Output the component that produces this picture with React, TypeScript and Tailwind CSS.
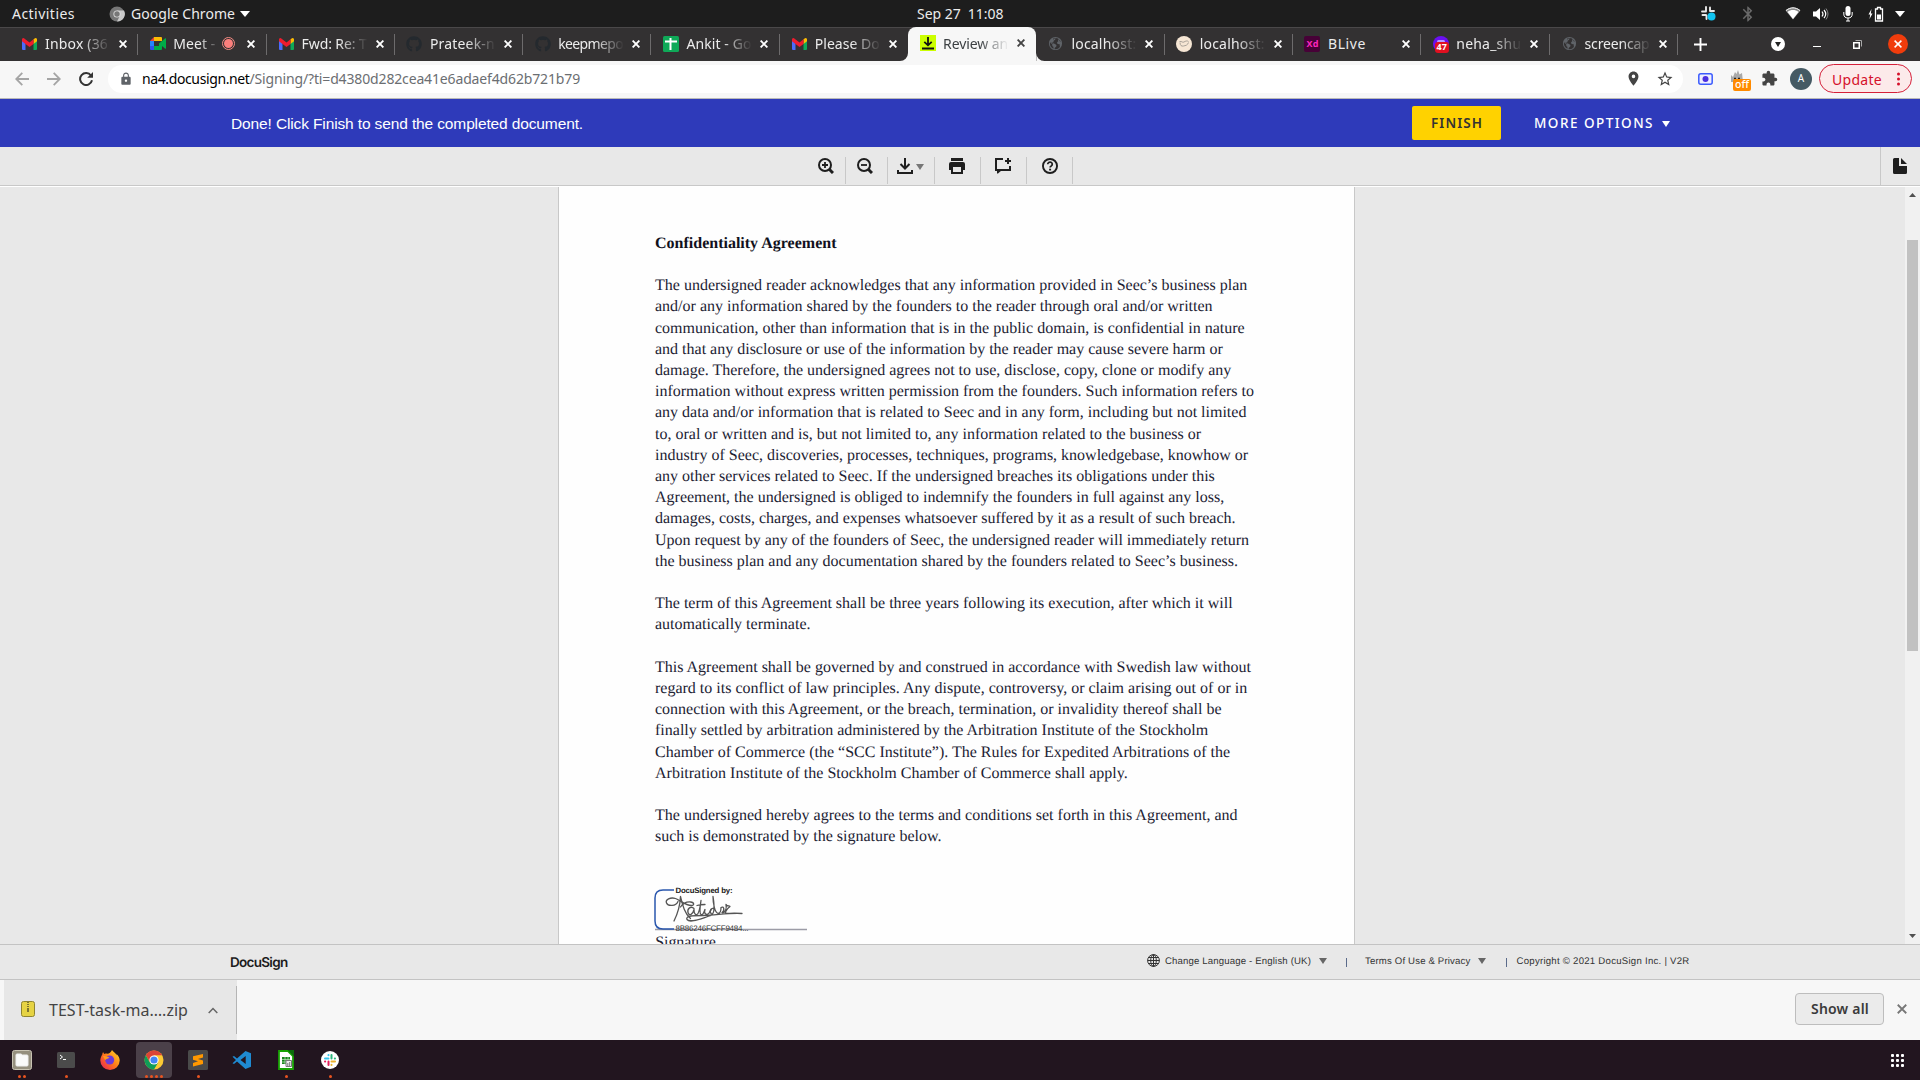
import { useLayoutEffect, useRef, useState, type ReactNode } from "react";
import { FaGithub } from "react-icons/fa";
import { MdExtension, MdLocationOn, MdStarBorder, MdLock, MdBluetooth } from "react-icons/md";
import { IoEarth } from "react-icons/io5";

const UI = "font-['Noto_Sans',sans-serif]";

/* Single-line label whose letter spacing is adjusted to fill the given width. */
function Fit({ w, className = "", children }: { w: number; className?: string; children: string }) {
  const ref = useRef<HTMLSpanElement>(null);
  const [ls, setLs] = useState(0);
  useLayoutEffect(() => {
    if (ref.current) setLs((w - ref.current.getBoundingClientRect().width) / children.length);
  }, [w, children]);
  return (
    <span ref={ref} className={`inline-block shrink-0 whitespace-pre ${className}`} style={{ letterSpacing: ls }}>
      {children}
    </span>
  );
}

const Gmail = () => (
  <svg width="15" height="12" viewBox="0 0 15 12">
    <path d="M0 1.500V11a1 1 0 0 0 1 1h2.500V5z" fill="#4b6bfb" />
    <path d="M15 1.500V11a1 1 0 0 1-1 1h-2.500V5z" fill="#0fa958" />
    <path d="M11.500 1.300 13 .3a1.300 1.300 0 0 1 2 1.200V3.200L11.500 6z" fill="#fbbc04" />
    <path d="M0 3.200V1.500A1.300 1.300 0 0 1 2 .3l5.500 4.200L11.500 1.300V6l-4 3-4-3z" fill="#ee1c2e" />
  </svg>
);
const Meet = () => (
  <svg width="16" height="13" viewBox="0 0 16 13">
    <path d="M0 4 4 0v4z" fill="#ea4335" />
    <path d="M4 0h7a1 1 0 0 1 1 1v3H4z" fill="#fbbc04" />
    <path d="M0 4h4v5H0z" fill="#2684fc" />
    <path d="M0 9h4v4H1a1 1 0 0 1-1-1z" fill="#2f55e8" />
    <path d="M4 9h5V6.500l3-2.500V12a1 1 0 0 1-1 1H4z" fill="#00ac47" />
    <path d="M12 4 15.200 1.300a.5.5 0 0 1 .8.4v9.600a.5.5 0 0 1-.8.4L12 9z" fill="#00ac47" />
    <path d="M4 4h5v5H4z" fill="#333132" />
  </svg>
);
const Sheets = () => (
  <svg width="16" height="16" viewBox="0 0 16 16">
    <rect width="16" height="16" rx="1.500" fill="#0fa958" />
    <path d="M2 5.500h12M7.500 2v12" stroke="#fff" strokeWidth="2" />
  </svg>
);
const DocuTab = () => (
  <svg width="16" height="16" viewBox="0 0 16 16">
    <rect width="16" height="16" fill="#ccff00" />
    <path d="M8 2v8M4.300 6.800 8 10.300l3.700-3.500M2 13.500h12" stroke="#111" strokeWidth="1.800" fill="none" />
  </svg>
);
const GlobeTab = () => <IoEarth size={15} color="#5f6368" />;
const Face = () => (
  <svg width="16" height="16" viewBox="0 0 16 16">
    <circle cx="8" cy="8" r="8" fill="#f6e6d4" />
    <path d="M3.500 5.500c2.500-.5 3 1.500 4.500.5s3-1.500 4.500-.5M4 6.500c0 3 1.500 4 3.500 3.500s4-.5 5-3.500" stroke="#a09a92" strokeWidth=".9" fill="none" />
  </svg>
);
const Xd = () => (
  <span className="flex h-4 w-4 items-center justify-center rounded-[2px] bg-[#470137] font-['Noto_Sans',sans-serif] text-[9px] font-bold text-[#ff26be]">Xd</span>
);
const Neha = () => (
  <span className="relative block h-4 w-4 rounded-full bg-[#6b10f2]">
    <span className="absolute top-[4px] left-[4px] h-[3px] w-[8px] rounded bg-[#b79cff]" />
    <span className="absolute top-[6px] left-[2px] flex h-[11px] w-[14px] items-center justify-center rounded-[3px] bg-[#e01020] font-['Noto_Sans',sans-serif] text-[9px] font-bold text-white">47</span>
  </span>
);
const Github = () => <FaGithub size={16} color="#24292e" />;

const TABS: { icon: () => ReactNode; text: string; w: number; rec?: boolean; active?: boolean; noFade?: boolean; sep?: boolean }[] = [
  { icon: Gmail, text: "Inbox (36", w: 63, sep: true },
  { icon: Meet, text: "Meet -", w: 42, rec: true, sep: true },
  { icon: Gmail, text: "Fwd: Re: T", w: 65, sep: true },
  { icon: Github, text: "Prateek-n", w: 65, sep: true },
  { icon: Github, text: "keepmepo", w: 65, sep: true },
  { icon: Sheets, text: "Ankit - Go", w: 65, sep: true },
  { icon: Gmail, text: "Please Do", w: 65 },
  { icon: DocuTab, text: "Review an", w: 65, active: true },
  { icon: GlobeTab, text: "localhost:", w: 65, sep: true },
  { icon: Face, text: "localhost:", w: 65, sep: true },
  { icon: Xd, text: "BLive", w: 38, sep: true, noFade: true },
  { icon: Neha, text: "neha_shu", w: 65, sep: true },
  { icon: GlobeTab, text: "screencap", w: 65, sep: true },
];

const Cross = ({ s = 8, c = "#fff", sw = 2 }: { s?: number; c?: string; sw?: number }) => (
  <svg width={s} height={s} viewBox="0 0 8 8">
    <path d="M.6.6l6.800 6.800M7.400.6.6 7.400" stroke={c} strokeWidth={(sw * 8) / s} />
  </svg>
);
const Tri = ({ w = 8, h = 6, c = "#fff" }: { w?: number; h?: number; c?: string }) => (
  <svg width={w} height={h} viewBox="0 0 8 6" preserveAspectRatio="none" className="shrink-0">
    <path d="M0 0h8L4 6z" fill={c} />
  </svg>
);

function TopBar() {
  return (
    <div className={`grid h-[27px] grid-cols-[917px_88px_1fr] items-center bg-[#1d1d1d] text-[14px] text-[#ececec] ${UI}`}>
      <div className="flex items-center pl-3">
        <Fit w={63}>Activities</Fit>
        <svg width="16" height="16" viewBox="0 0 16 16" className="mr-[6px] ml-[34px]">
          <circle cx="8" cy="8" r="7.500" fill="#777" />
          <path d="M8 4.500h7A7.500 7.500 0 0 1 8 15.500l3-6z" fill="#c9c9c9" />
          <circle cx="8" cy="8" r="3.600" fill="#ddd" />
          <circle cx="8" cy="8" r="2.700" fill="#777" />
        </svg>
        <Fit w={104}>Google Chrome</Fit>
        <span className="ml-[5px]"><Tri w={10} h={6} /></span>
      </div>
      <Fit w={87.5} className="-mt-px">Sep 27  11:08</Fit>
      <div className="flex items-center pl-[696px]">
        <svg width="15" height="15" viewBox="0 0 15 15">
          <path d="M5 1v4M9 1.500v3.500M1 5.500h4M9.500 5h3.500M1.500 9h3.500M5.500 9.500V13" stroke="#e8e8e8" strokeWidth="1.900" strokeLinecap="round" />
          <circle cx="10.500" cy="10.500" r="4" fill="#12c5f2" />
        </svg>
        <MdBluetooth size={18} color="#6a6a6a" className="ml-[23px]" />
        <svg width="16" height="13" viewBox="0 0 16 13" className="ml-[28px]">
          <path d="M.5 3.500C5-.5 11-.5 15.500 3.500L8 12.500z" fill="#8b8b8b" />
          <path d="M2.500 5c3.500-2.600 7.500-2.600 11 0L8 12z" fill="#fff" />
          <path d="M1 3.500c4.500-3.600 9.500-3.600 14 0" stroke="#fff" fill="none" />
        </svg>
        <svg width="16" height="14" viewBox="0 0 16 14" className="ml-[12px]">
          <path d="M0 4.500h3L7 1v12L3 9.500H0z" fill="#fff" />
          <path d="M9 4.500q2 2.500 0 5M11 3q3.500 4 0 8" stroke="#fff" fill="none" strokeWidth="1.200" />
          <path d="M13 1.500q4 5.500 0 11" stroke="#888" fill="none" />
        </svg>
        <svg width="10" height="17" viewBox="0 0 10 17" className="ml-[14px]">
          <rect x="2.500" y="1" width="5" height="10" rx="2.500" fill="#fff" />
          <path d="M.8 7v2a4.200 4 0 0 0 8.400 0V7M5 13v3M3 16h4" stroke="#fff" fill="none" />
        </svg>
        <svg width="16" height="16" viewBox="0 0 16 16" className="ml-[15px]">
          <path d="M3.500 3 .5 8.500H2.200L1.500 13l3-5.500H2.800z" fill="#fff" />
          <path d="M7.500 3v12h7V3h-2V1.500h-3V3z" stroke="#fff" strokeWidth="1.300" fill="none" />
          <path d="M9 8.500h4v5H9z" fill="#fff" />
        </svg>
        <span className="ml-[11px]"><Tri w={10} h={6} /></span>
      </div>
    </div>
  );
}

function TabStrip() {
  return (
    <div className={`flex h-[34px] border-t border-[#4a4849] bg-[#333132] pl-[10px] text-[14px] ${UI}`}>
      {TABS.map((t, i) => (
        <div
          key={i}
          className={`relative flex w-[128.300px] shrink-0 items-center pb-[2px] pl-[11.500px] ${t.active ? "-mt-px h-[34px] rounded-t-[8px] bg-[#f7f7f7] text-[#3c4043]" : "h-[33px] text-[#ececec]"}`}
        >
          {t.active && (
            <svg width="145" height="8" viewBox="0 0 145 8" className="absolute bottom-0 left-[-8px]">
              <path d="M8 0v8H0a8 8 0 0 0 8-8zM136.300 0v8h8a8 8 0 0 1-8-8z" fill="#f7f7f7" />
            </svg>
          )}
          <span className="flex w-4 shrink-0 justify-center">{t.icon()}</span>
          <div
            className={`ml-[7.500px] shrink-0 ${t.rec ? "w-[43px]" : "w-[66px]"} ${t.noFade ? "" : t.rec ? "[mask-image:linear-gradient(to_right,#000_60%,transparent_110%)]" : "[mask-image:linear-gradient(to_right,#000_55%,transparent_100%)]"}`}
          >
            <Fit w={t.w}>{t.text}</Fit>
          </div>
          {t.rec && (
            <span className="ml-[6px] flex h-[13px] w-[13px] shrink-0 items-center justify-center rounded-full border border-[#f28b82]">
              <span className="h-[9px] w-[9px] rounded-full bg-[#fb7f7c]" />
            </span>
          )}
          <span className={t.rec ? "ml-[12px] flex" : "ml-[8px] flex"}><Cross c={t.active ? "#444" : "#fff"} sw={1.9} /></span>
          {t.sep && <span className="absolute top-[6px] right-0 h-[21px] w-px bg-[#6d6b6c]" />}
        </div>
      ))}
      <div className="flex items-center pb-px pl-[16px]">
        <svg width="13" height="13" viewBox="0 0 13 13"><path d="M6.500 0v13M0 6.500h13" stroke="#fff" strokeWidth="1.900" /></svg>
        <span className="ml-[64px] flex h-[14px] w-[14px] items-center justify-center rounded-full bg-white"><Tri w={6} h={5} c="#222" /></span>
        <span className="mt-[5px] ml-[28px] h-px w-[8px] bg-white" />
        <svg width="9" height="9" viewBox="0 0 9 9" className="ml-[32px]">
          <path d="M.75 2.750h5.500v5.500H.75z" stroke="#fff" strokeWidth="1.500" fill="none" />
          <path d="M2.500.5h6v6" stroke="#aaa" fill="none" />
        </svg>
        <span className="ml-[26px] flex h-[20px] w-[20px] items-center justify-center rounded-full bg-[#f03c0c]"><Cross s={8} sw={1.5} /></span>
      </div>
    </div>
  );
}

function AddressBar() {
  return (
    <div className={`flex h-[38px] items-center border-b border-[#b9b9b9] bg-[#f7f7f7] pb-[2px] pl-[15px] text-[14px] ${UI}`}>
      <svg width="14" height="14" viewBox="0 0 14 14"><path d="M14 7H1.500M7.300.8 1.200 7l6.100 6.200" stroke="#a5a5a5" strokeWidth="1.800" fill="none" /></svg>
      <svg width="14" height="14" viewBox="0 0 14 14" className="ml-[18px]"><path d="M0 7h12.500M6.700.8 12.800 7l-6.100 6.200" stroke="#a5a5a5" strokeWidth="1.800" fill="none" /></svg>
      <svg width="14" height="14" viewBox="0 0 14 14" className="ml-[18px]">
        <path d="M12 3.500A6 6 0 1 0 13 8.300" stroke="#333" strokeWidth="2" fill="none" />
        <path d="M14 0v5.800H8.200z" fill="#333" />
      </svg>
      <div className="ml-[15px] flex h-[28px] w-[1575px] shrink-0 items-center rounded-full bg-white pr-[9px] pl-[11px]">
        <MdLock size={14} color="#5f6368" />
        <span className="ml-[9px] flex">
          <Fit w={107.500} className="text-black">na4.docusign.net</Fit>
          <Fit w={330.500} className="text-[#6b6e72]">/Signing/?ti=d4380d282cea41e6adaef4d62b721b79</Fit>
        </span>
        <span className="flex-1" />
        <MdLocationOn size={17} color="#444" />
        <MdStarBorder size={18} color="#444" className="ml-[14px]" />
      </div>
      <svg width="15" height="12" viewBox="0 0 15 12" className="ml-[15px]">
        <rect x=".8" y=".8" width="13.400" height="10.400" rx="2" stroke="#3b5bfd" strokeWidth="1.500" fill="#eef" />
        <circle cx="7.500" cy="6" r="3" fill="#4a2fe0" />
      </svg>
      <span className="relative ml-[17px] block h-[18px] w-[14px]">
        <svg width="14" height="12" viewBox="0 0 14 12" className="block">
          <path d="M1 12V5L3 7 5 2l1.500 2L8 0l1.500 4.500L12 3l1 9z" fill="#a9a9a9" />
          <path d="M4 8.500h2M8 8.500h2" stroke="#222" strokeWidth="1.500" />
        </svg>
        <span className="absolute top-[9px] left-[3px] flex h-[12px] w-[18px] items-center justify-center rounded-[2px] bg-[#ff8a00] text-[10.500px] leading-none font-medium text-white"><Fit w={14}>off</Fit></span>
      </span>
      <MdExtension size={17} color="#444" className="ml-[17px]" />
      <span className="ml-[12px] flex h-[22px] w-[22px] items-center justify-center rounded-full bg-[#455a64] text-[10px] text-white">A</span>
      <span className="ml-[7px] flex h-[29px] w-[93px] items-center rounded-full border border-[#d5203a] bg-[#fceaea] pl-[12px] text-[#d5102a]">
        <Fit w={50} className="mt-px">Update</Fit>
        <svg width="3" height="14" viewBox="0 0 3 14" className="ml-[15px]"><circle cx="1.500" cy="2" r="1.500" fill="#d5102a" /><circle cx="1.500" cy="7" r="1.500" fill="#d5102a" /><circle cx="1.500" cy="12" r="1.500" fill="#d5102a" /></svg>
      </span>
    </div>
  );
}

function Banner() {
  return (
    <div className="flex h-[48px] items-center bg-[#2e3aba] pl-[231px] text-white">
      <div className="w-[1181px]">
        <Fit w={352} className="font-['Liberation_Sans',sans-serif] text-[15.500px]">Done! Click Finish to send the completed document.</Fit>
      </div>
      <div className={`flex h-[34px] w-[89px] items-center rounded-[2px] bg-[#ffd200] pl-[19px] text-[13.500px] font-semibold text-[#333] ${UI}`}>
        <Fit w={52}>FINISH</Fit>
      </div>
      <div className={`ml-[33px] flex items-center text-[13.500px] font-medium ${UI}`}>
        <Fit w={120}>MORE OPTIONS</Fit>
        <span className="mt-[2px] ml-[8px]"><Tri w={8} h={6} /></span>
      </div>
    </div>
  );
}

const INK = "#1e1e1e";
function DocTools() {
  const cell = "flex h-[27px] items-start justify-center border-r border-[#c8c8c8] pt-px";
  return (
    <div className="flex h-[39px] border-b border-[#c8c8c8] bg-[#e8e8e8]">
      <div className="flex flex-1 pt-[10px] pl-[807px]">
        <div className={`${cell} w-[39px]`}>
          <svg width="16" height="16" viewBox="0 0 16 16" fill="none" stroke={INK}><circle cx="7" cy="7" r="6" strokeWidth="2" /><path d="m11 11 4 4" strokeWidth="3" /><path d="M4 7h6M7 4v6" strokeWidth="1.800" /></svg>
        </div>
        <div className={`${cell} w-[42px] pr-[3px]`}>
          <svg width="16" height="16" viewBox="0 0 16 16" fill="none" stroke={INK}><circle cx="7" cy="7" r="6" strokeWidth="2" /><path d="m11 11 4 4" strokeWidth="3" /><path d="M4 7h6" strokeWidth="1.800" /></svg>
        </div>
        <div className={`${cell} w-[47px] pr-px`}>
          <svg width="16" height="16" viewBox="0 0 16 16" fill="none" stroke={INK} strokeWidth="2" className="mr-[3px]"><path d="M8 0v10M3.500 6 8 10.500 12.500 6M1 12v3h14v-3" /></svg>
          <span className="mt-[6px] flex"><Tri w={8} h={6} c="#777" /></span>
        </div>
        <div className={`${cell} w-[46px] pr-px`}>
          <svg width="16" height="16" viewBox="0 0 16 16"><path d="M2 0h12v3H2z" fill={INK} /><path d="M2 4h12a2 2 0 0 1 2 2v6h-2v4H2v-4H0V6a2 2 0 0 1 2-2z" fill={INK} /><path d="M4 9h8v5H4z" fill="#e8e8e8" /></svg>
        </div>
        <div className={`${cell} w-[46px] pr-px`}>
          <svg width="16" height="16" viewBox="0 0 16 16" fill="none" stroke={INK} strokeWidth="2"><path d="M8 1H1v11h14V8" /><path d="M13 0v6M10 3h6" /><path d="M2 12h5l-4 3.500H2z" fill={INK} stroke="none" /></svg>
        </div>
        <div className={`${cell} w-[46px]`}>
          <svg width="16" height="16" viewBox="0 0 16 16" fill="none" stroke={INK} strokeWidth="1.900"><circle cx="8" cy="8" r="7.050" /><path d="M5.700 6.300a2.300 2.100 0 1 1 3.600 1.600q-1.200.7-1.200 1.600" strokeWidth="1.700" /><path d="M7.100 10.700h2v1.800h-2z" fill={INK} stroke="none" /></svg>
        </div>
      </div>
      <div className="flex w-[40px] border-l border-[#c8c8c8] pt-[11px] pl-[12px]">
        <svg width="14" height="16" viewBox="0 0 14 16"><path d="M1.500 0H6v8h8v6.500a1.500 1.500 0 0 1-1.500 1.500h-11A1.500 1.500 0 0 1 0 14.500v-13A1.500 1.500 0 0 1 1.500 0zM8 0l6 6H8z" fill={INK} /></svg>
      </div>
    </div>
  );
}

const PARAGRAPHS = [
  [
    "The undersigned reader acknowledges that any information provided in Seec’s business plan",
    "and/or any information shared by the founders to the reader through oral and/or written",
    "communication, other than information that is in the public domain, is confidential in nature",
    "and that any disclosure or use of the information by the reader may cause severe harm or",
    "damage. Therefore, the undersigned agrees not to use, disclose, copy, clone or modify any",
    "information without express written permission from the founders. Such information refers to",
    "any data and/or information that is related to Seec and in any form, including but not limited",
    "to, oral or written and is, but not limited to, any information related to the business or",
    "industry of Seec, discoveries, processes, techniques, programs, knowledgebase, knowhow or",
    "any other services related to Seec. If the undersigned breaches its obligations under this",
    "Agreement, the undersigned is obliged to indemnify the founders in full against any loss,",
    "damages, costs, charges, and expenses whatsoever suffered by it as a result of such breach.",
    "Upon request by any of the founders of Seec, the undersigned reader will immediately return",
    "the business plan and any documentation shared by the founders related to Seec’s business.",
  ],
  ["The term of this Agreement shall be three years following its execution, after which it will", "automatically terminate."],
  [
    "This Agreement shall be governed by and construed in accordance with Swedish law without",
    "regard to its conflict of law principles. Any dispute, controversy, or claim arising out of or in",
    "connection with this Agreement, or the breach, termination, or invalidity thereof shall be",
    "finally settled by arbitration administered by the Arbitration Institute of the Stockholm",
    "Chamber of Commerce (the “SCC Institute”). The Rules for Expedited Arbitrations of the",
    "Arbitration Institute of the Stockholm Chamber of Commerce shall apply.",
  ],
  ["The undersigned hereby agrees to the terms and conditions set forth in this Agreement, and", "such is demonstrated by the signature below."],
];

function Signature() {
  return (
    <svg width="160" height="100" viewBox="654 847.500 160 100" className="-ml-px block">
      <path d="M655 929h152" stroke="#9c9ca6" strokeWidth="1.500" />
      <path d="M674 889.500h-11q-8 0-8 8v23q0 8 8 8h11" stroke="#2a57ad" strokeWidth="1.500" fill="none" />
      <text x="675.500" y="892.500" textLength="57" fontFamily="Liberation Sans, sans-serif" fontWeight="700" fontSize="7.800" fill="#222">DocuSigned by:</text>
      <text x="675.500" y="930.800" textLength="73" fontFamily="Liberation Sans, sans-serif" fontSize="8" fill="#333">8B86246FCFF9484...</text>
      <g fill="none" stroke="#555" strokeWidth="1.300" strokeLinecap="round" strokeLinejoin="round">
        <path d="M678 901c-2 5-10 5-11.500 1.500s4-6 9-4.500c5 2 10 7 16 7 3 0 3-3-1-3.500-4-.3-8 2-10 5" />
        <path d="M674 920.500c3-6 6-14 6.500-24.500 2 8 4 17 10 22" />
        <path d="M694 908c-3-3-7 0-6 4s5 2 6-3c0 3 1 6 3 5s3-6 4-14c-1 7-2 13 0 14s3-3 4-5c-1 3 0 5 2 5s3-3 4-5M697 905c3-1 6-1 8-1" />
        <path d="M715 909c-3-3-6 1-4 4 3 2 4-5 2-17 0 8 2 16 5 17 3 0 3-5 3-6 3-2 4 3 1 5 3 1 5-4 4-8 1 2 4 1 4 2-4 3-6 7-3 7 4 0 4-1 15 0-13-1-27 2-39 2-9 0-18 0-16 4 3 4 14-1 24-4" />
      </g>
      <text x="655.300" y="946.300" textLength="60.500" fontFamily="Liberation Serif, serif" fontSize="16" fill="#222233">Signature</text>
    </svg>
  );
}

function DocumentView() {
  return (
    <div className="flex h-[758px] border-t border-white bg-[#e8e8e8]">
      <div className="flex flex-1 overflow-hidden pl-[558px]">
        <div className="-mt-px h-[758px] w-[797px] overflow-hidden border-x border-[#c8c8c8] bg-[#fefefe] pt-[46.800px] pl-[96px] font-['Liberation_Serif',serif] text-[16.010px] leading-[21.200px] whitespace-pre text-[#222233] [text-rendering:geometricPrecision]">
          <div className="mb-[21.200px] font-bold text-[#11111c]">Confidentiality Agreement</div>
          {PARAGRAPHS.map((p, i) => (
            <div key={i} className={i < 3 ? "mb-[21.200px]" : ""}>
              {p.map((l) => (
                <div key={l}>{l}</div>
              ))}
            </div>
          ))}
          <Signature />
        </div>
      </div>
      <div className="flex w-[15px] flex-col items-center bg-[#f1f1f1]">
        <span className="mt-[6px] flex rotate-180"><Tri w={7} h={4} c="#505050" /></span>
        <span className="mt-[43px] h-[411px] w-[11px] bg-[#c1c1c1]" />
        <span className="mt-auto mb-[6px] flex"><Tri w={7} h={4} c="#505050" /></span>
      </div>
    </div>
  );
}

function Footer() {
  return (
    <div className="flex h-[36px] items-center border-y border-[#c3c3c3] bg-[#e8e8e8] pl-[230px] font-['Liberation_Sans',sans-serif] text-[9.600px] text-[#333] [text-rendering:geometricPrecision]">
      <div className="w-[917px]">
        <Fit w={57.500} className="mt-[2px] font-['Inter',sans-serif] text-[13.500px] font-semibold text-[#1c1c1c]">DocuSign</Fit>
      </div>
      <svg width="13" height="13" viewBox="0 0 13 13" fill="none" stroke="#333" className="mt-[-3px] mr-[5px]">
        <circle cx="6.500" cy="6.500" r="5.900" /><ellipse cx="6.500" cy="6.500" rx="2.800" ry="5.900" /><path d="M6.500.5v12M.5 6.500h12M1.500 3.500h10M1.500 9.500h10" />
      </svg>
      <Fit w={146}>Change Language - English (UK)</Fit>
      <span className="mt-[-2px] ml-[8px]"><Tri w={8} h={6} c="#666" /></span>
      <span className="ml-[19px] h-[9px] w-px bg-[#5b6b8a]" />
      <Fit w={105.500} className="ml-[18px]">Terms Of Use &amp; Privacy</Fit>
      <span className="mt-[-2px] ml-[7px]"><Tri w={8} h={6} c="#666" /></span>
      <span className="mr-[10px] ml-[20px] h-[9px] w-px bg-[#5b6b8a]" />
      <Fit w={173}>Copyright © 2021 DocuSign Inc. | V2R</Fit>
    </div>
  );
}

function Downloads() {
  return (
    <div className={`flex h-[60px] items-center bg-[#f7f7f7] pl-[4px] ${UI}`}>
      <div className="flex h-full w-[233px] items-center bg-[#e7e7e7] pl-[17px] text-[16px] text-[#444]">
        <svg width="14" height="16" viewBox="0 0 14 16" className="-mt-[2px]"><rect x=".5" y=".5" width="13" height="15" rx="2" fill="#e6d343" stroke="#8f8430" /><path d="M7 1v9" stroke="#7d7430" strokeWidth="2" strokeDasharray="1 1" /><path d="M6 7h2v4H6z" fill="#7d7430" /></svg>
        <Fit w={139} className="ml-[14px]">TEST-task-ma….zip</Fit>
        <svg width="10" height="7" viewBox="0 0 10 7" className="ml-[20px]"><path d="m.7 6 4.300-4.500L9.300 6" stroke="#666" strokeWidth="1.500" fill="none" /></svg>
        <span className="ml-auto h-[48px] w-px bg-[#b5b5b5]" />
      </div>
      <div className="-mt-[2px] ml-auto flex h-[32px] w-[89px] items-center rounded-[4px] border border-[#bdbdbd] bg-[#ebebeb] pl-[15px] text-[14px] font-semibold text-[#3a3a3a]">
        <Fit w={58} className="-mt-px">Show all</Fit>
      </div>
      <span className="-mt-[2px] mr-[13px] ml-[13px] flex"><Cross s={10} c="#777" sw={1.8} /></span>
    </div>
  );
}

const Files = () => (
  <svg width="20" height="20" viewBox="0 0 20 20"><rect x=".5" y=".5" width="19" height="19" rx="2" fill="#958f7e" stroke="#c9c4b4" /><path d="M4 5q0-1 1-1h4l1.500 1H15q1 0 1 1v9q0 1-1 1H5q-1 0-1-1z" fill="#fafafa" stroke="#eee" /></svg>
);
const Term = () => (
  <svg width="18" height="16" viewBox="0 0 18 16"><rect width="18" height="16" rx="1.500" fill="#4b4b4b" /><path d="m3 3 2.500 2L3 7M6 7.500h3" stroke="#fff" fill="none" /></svg>
);
const Firefox = () => (
  <svg width="20" height="20" viewBox="0 0 20 20">
    <defs><linearGradient id="fx" x1="1" y1="0" x2="0" y2="1"><stop offset="0" stopColor="#ffe226" /><stop offset=".5" stopColor="#ff7a1a" /><stop offset="1" stopColor="#e8185a" /></linearGradient></defs>
    <path d="M12 0c1 2 4 3 4.500 5.500 0-.8 0-1.200-.3-1.800C19 6 19.700 8.500 19.700 10.500a9.700 9.500 0 0 1-19.400 0c0-2.500 1-4.500 2-6 0-1 .3-1.800.8-2.500.3 1 .8 1.600 1.400 2 1-.5 2-.5 3-.3C9 3.500 11 2.500 12 0z" fill="url(#fx)" />
    <circle cx="9.700" cy="10" r="4.500" fill="#6b3bd8" />
    <path d="M3 6c2 0 4 0 6.500 1.500-1 1.500-3.500 1-4 2.500-1-1-2-2.500-2.500-4z" fill="#ff9a1f" />
  </svg>
);
const Chrome = () => (
  <svg width="20" height="20" viewBox="0 0 20 20">
    <circle cx="10" cy="10" r="9.500" fill="#fcc934" />
    <path d="M1.770 5.250A9.500 9.500 0 0 1 18.230 5.250H10l-4.100 7.100z" fill="#db4437" />
    <path d="M1.770 5.250 5.890 12.380 14.110 12.380 10 19.500A9.500 9.500 0 0 1 1.770 5.250z" fill="#0f9d58" />
    <circle cx="10" cy="10" r="4.600" fill="#fff" /><circle cx="10" cy="10" r="3.600" fill="#4285f4" />
  </svg>
);
const Sublime = () => (
  <svg width="20" height="20" viewBox="0 0 20 20"><rect width="20" height="20" rx="1.500" fill="#4a4a4a" /><path d="M15 4v3.500L10 9l5 1.500V14L5 16.500V13l5-1.700L5 9.700V6.300z" fill="#ff9800" /></svg>
);
const Code = () => (
  <svg width="20" height="18" viewBox="0 0 20 18"><path d="M13.500 0 19 2.300v13.400L13.500 18 5 10.500 2 13 .5 12.200 4 9 .5 5.800 2 5l3 2.500zM13.700 5 8.500 9l5.200 4z" fill="#1f8ad2" fillRule="evenodd" /></svg>
);
const Calc = () => (
  <svg width="16" height="20" viewBox="0 0 16 20"><path d="M1 1h9l5 5v13H1z" fill="#fff" stroke="#18a303" strokeWidth="1.800" /><path d="M9.500 0H16v6.500z" fill="#0b6b0b" /><path d="M4 7h8v7H4z" fill="#18841b" /><path d="M4 9.500h8M4 12h8M7 7v7M10 7v7" stroke="#bfe6bf" strokeWidth=".7" /><path d="M8 10.500h5.500v6H8z" fill="#eee" stroke="#777" /><path d="M9.800 16v-3M11.700 16v-4" stroke="#777" /></svg>
);
const Slack = () => (
  <svg width="18" height="18" viewBox="0 0 18 18" strokeWidth="2" strokeLinecap="round">
    <circle cx="9" cy="9" r="9" fill="#fff" />
    <path d="M7.500 4v.2M4 7.500h3.500" stroke="#36c5f0" /><path d="M10.500 4v3.500M14 7.500h-.2" stroke="#2eb67d" /><path d="M10.500 10.500H14M10.500 13.800v.2" stroke="#ecb22e" /><path d="M7.500 10.500V14M4 10.500h.2" stroke="#e01e5a" />
  </svg>
);

const DOCK: { icon: () => ReactNode; dots: number; active?: boolean }[] = [
  { icon: Files, dots: 2 }, { icon: Term, dots: 1 }, { icon: Firefox, dots: 0 }, { icon: Chrome, dots: 4, active: true },
  { icon: Sublime, dots: 1 }, { icon: Code, dots: 0 }, { icon: Calc, dots: 1 }, { icon: Slack, dots: 1 },
];

function Dock() {
  return (
    <div className="flex h-[40px] items-center bg-[#22151f] pr-[16px] pl-[4px]">
      {DOCK.map((d, i) => (
        <div key={i} className={`relative mr-[8px] flex h-[36px] w-[36px] items-center justify-center rounded-[4px] ${d.active ? "bg-[#4b4049]" : ""}`}>
          {d.icon()}
          <span className="absolute inset-x-0 bottom-0 flex justify-center gap-[2px]">
            {Array.from({ length: d.dots }, (_, k) => (
              <span key={k} className="h-[3px] w-[3px] rounded-full bg-[#e95420]" />
            ))}
          </span>
        </div>
      ))}
      <div className="ml-auto grid grid-cols-3 gap-[2px]">
        {Array.from({ length: 9 }, (_, k) => (
          <span key={k} className="h-[3px] w-[3px] rounded-[1px] bg-white" />
        ))}
      </div>
    </div>
  );
}

export default function App() {
  return (
    <div className="flex h-[1080px] w-[1920px] flex-col overflow-hidden">
      <TopBar />
      <TabStrip />
      <AddressBar />
      <Banner />
      <DocTools />
      <DocumentView />
      <Footer />
      <Downloads />
      <Dock />
    </div>
  );
}
